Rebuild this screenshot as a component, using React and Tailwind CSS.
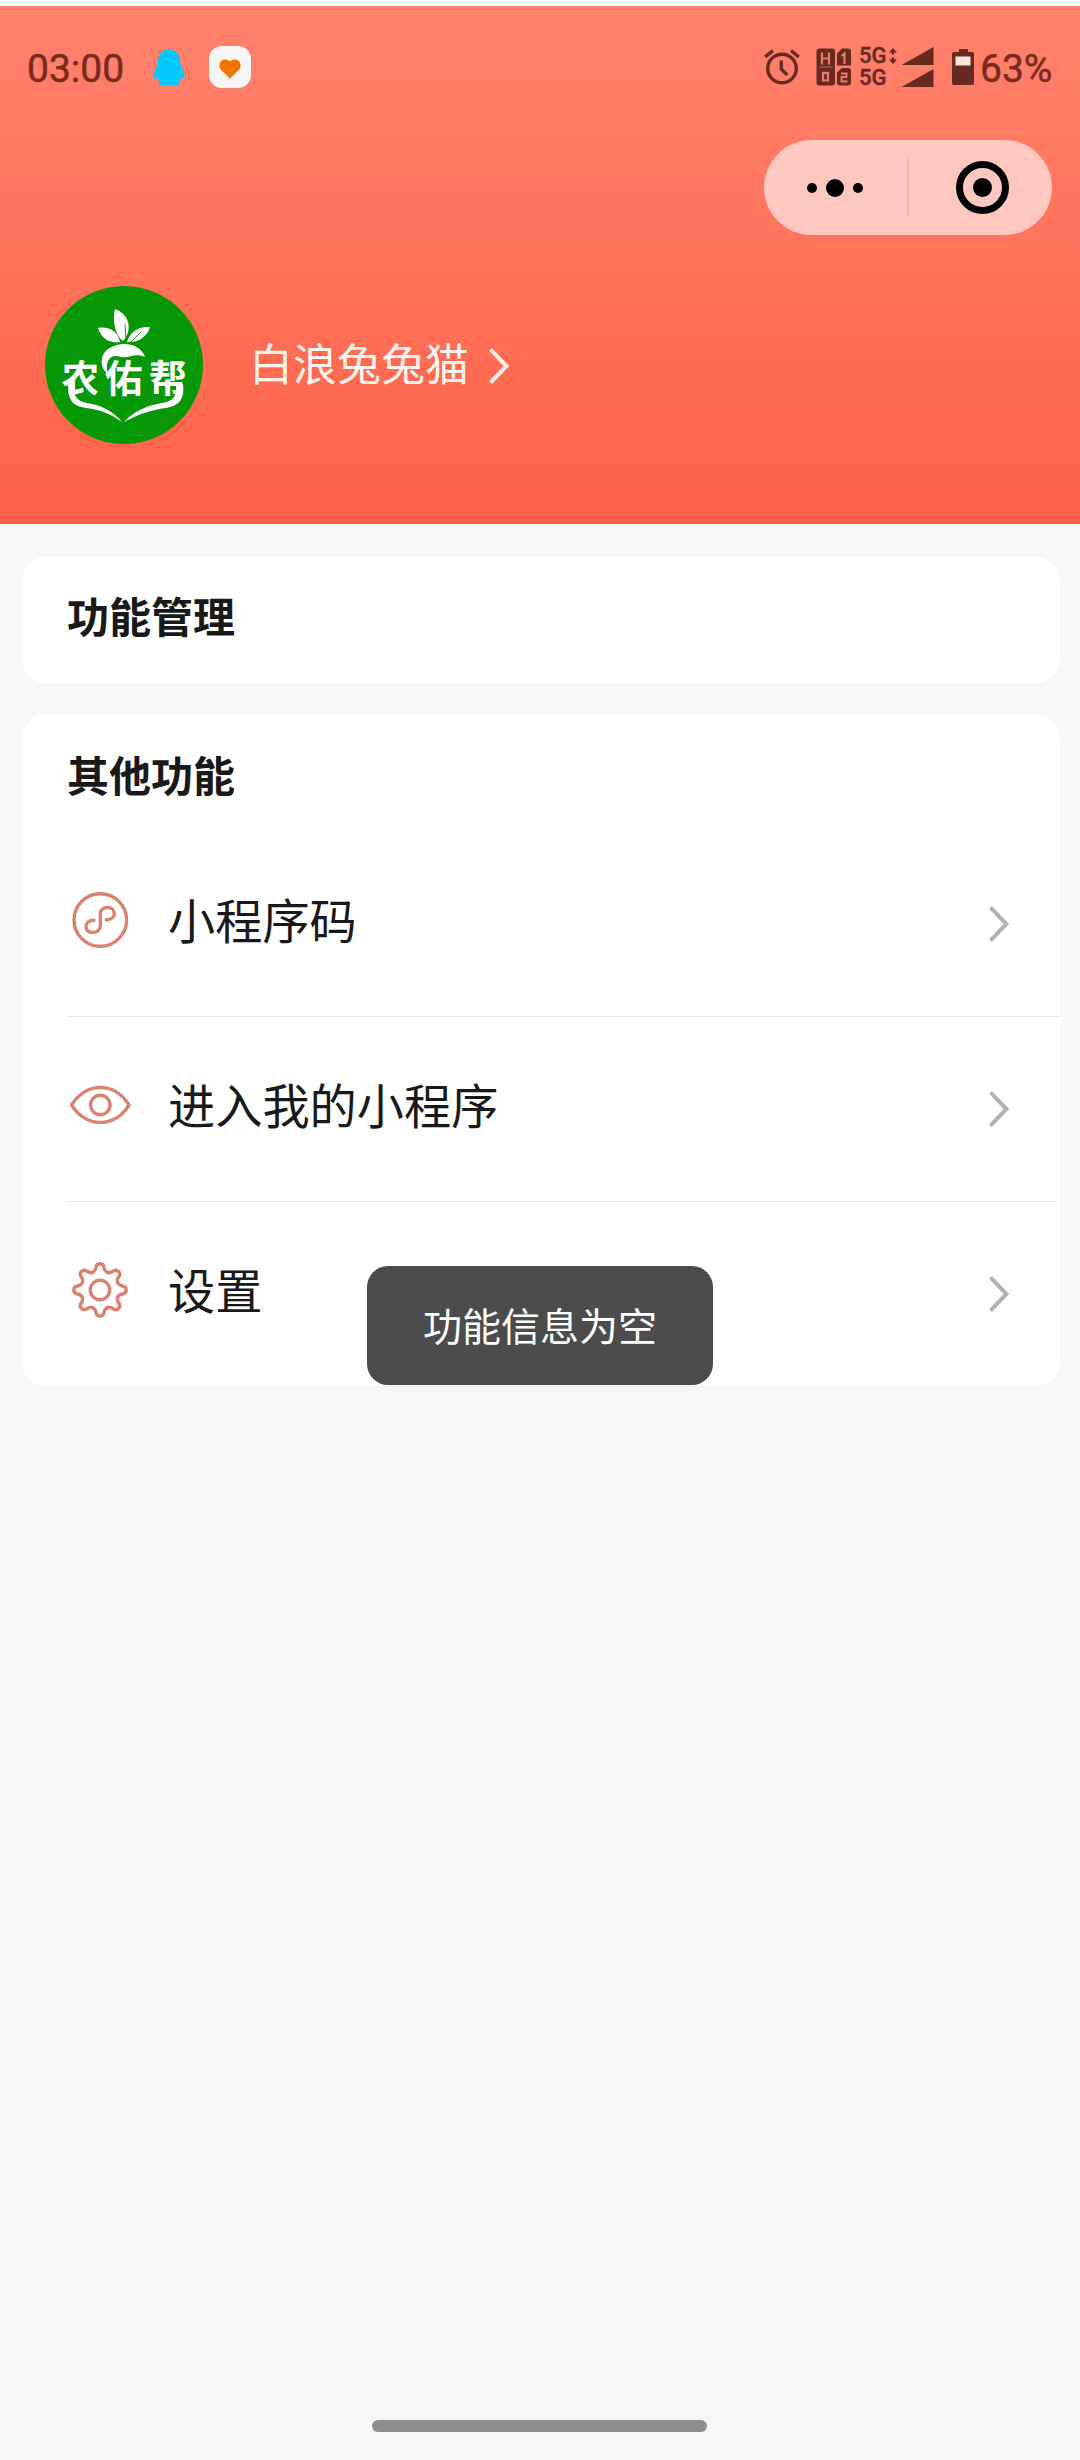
const Chevron = ({ className }) => (
    <svg viewBox="0 0 20 36" className={className} fill="none" stroke="currentColor" strokeWidth="4">
        <path d="M1.4 1.4 L17.400 18 L1.4 34.600" />
    </svg>
);

const QQIcon = () => (
    <svg viewBox="0 0 32 37" className="w-8 h-[37px] ml-[29px]" fill="#05c8fe">
        <path d="M16 0.500C9.500 0.500 5.500 5 5 12l-1 5C2 20.500 0.500 24 0.500 28c0 2.500 1.500 2.500 4 .5.300 1.600.900 2.500 1.500 3.500v4.500h20V32c.6-1 1.200-1.900 1.500-3.500 2.500 2 4 2 4-.5 0-4-1.500-7.500-3.500-11l-1-5C26.500 5 22.500 0.500 16 0.500z" />
    </svg>
);

const HeartTile = () => (
    <div className="w-[42px] h-[42px] ml-6 rounded-[13px] bg-[#f8f5f6] flex items-center justify-center">
        <svg viewBox="0 0 22 20" className="w-[22px] h-5 mt-[3px]" fill="#f47200">
            <path d="M11 19.500 L2.500 11.300C-2 6.500 1.500 0.500 6 0.500c2.200 0 4 1 5 1.800 1-.8 2.800-1.800 5-1.800 4.500 0 8 6 3.500 10.800z" />
        </svg>
    </div>
);

const AlarmIcon = () => (
    <svg viewBox="0 0 36 36" className="w-9 h-9" fill="none" stroke="currentColor" strokeWidth="3.400">
        <circle cx="18" cy="19.500" r="14.300" />
        <path d="M1.200 7.800 L9 1.700 M34.800 7.800 L27 1.700" />
        <path d="M17.300 11.500 v8.500 l6 6" />
    </svg>
);

const SimIcon = () => (
    <svg viewBox="0 0 36 38" className="w-9 h-[38px] ml-4">
        <rect x="0.500" y="0.500" width="18.500" height="37" rx="3" fill="currentColor" />
        <path d="M26 0.500h6a3 3 0 0 1 3 3v14h-14V5.500z" fill="currentColor" />
        <path d="M26 20h6a3 3 0 0 1 3 3v11.500a3 3 0 0 1-3 3h-8a3 3 0 0 1-3-3v-10z" fill="currentColor" />
        <g fill="none" stroke="#ee7966" strokeWidth="2.200">
            <path d="M6 4.500v12 M13 4.500v12 M6 10.500h7" />
            <path d="M3 19h13.500" strokeWidth="0.700" />
            <rect x="7" y="25" width="5" height="7.500" />
            <path d="M25.500 8 l3-2.500v10.500" />
            <path d="M25 25.500h5.500v3.500h-5v4.500h6" strokeWidth="1.900" />
        </g>
    </svg>
);

const SignalIcon = () => (
    <svg viewBox="0 0 33 40" className="w-[33px] h-10 ml-1" fill="currentColor">
        <path d="M0.500 18 L32.500 0V18z M0.500 40 L32.500 22V40z" />
    </svg>
);

const BatteryIcon = () => (
    <svg viewBox="0 0 22 36" className="w-[22px] h-9 ml-[18px]">
        <path d="M7 0h9v3h4a2 2 0 0 1 2 2v29a2 2 0 0 1-2 2H2a2 2 0 0 1-2-2V5a2 2 0 0 1 2-2h5z" fill="currentColor" />
        <rect x="3.500" y="7.500" width="15" height="9" fill="#ffe4df" />
    </svg>
);

const StatusBar = () => (
    <div className="h-[122px] pl-[27px] pr-[28px] flex items-center text-[#682a20]">
        <span className="w-[97px] font-[Roboto,sans-serif] text-[39px] leading-[46px] text-[#7a2a1d] [-webkit-text-stroke:0.5px] pt-1">03:00</span>
        <QQIcon />
        <HeartTile />
        <div className="ml-auto flex items-center">
            <AlarmIcon />
            <SimIcon />
            <div className="ml-[7px] w-[28px] font-[Roboto,sans-serif] text-[22px] leading-[22px] font-medium [-webkit-text-stroke:0.4px]">
                <div>5G</div>
                <div>5G</div>
            </div>
            <svg viewBox="0 0 8 16" className="w-2 h-4 ml-[2px] mb-[22px]" fill="currentColor">
                <path d="M4 0l4 4.500H5.200v2H2.800v-2H0z M4 16l4-4.500H5.200v-2H2.800v2H0z" />
            </svg>
            <SignalIcon />
            <BatteryIcon />
            <span className="ml-[6px] w-[72px] font-[Roboto,sans-serif] text-[39px] leading-[46px] text-[#7a2a1d] [-webkit-text-stroke:0.5px] pt-1">63%</span>
        </div>
    </div>
);

const Capsule = () => (
    <div className="w-[288px] h-[95px] ml-auto mr-7 mt-3 rounded-full bg-[#fec7bf] flex items-center">
        <div className="w-[144px] flex items-center justify-center gap-[9px] pr-[3px]">
            <span className="w-[10px] h-[10px] rounded-full bg-black" />
            <span className="w-[18px] h-[18px] rounded-full bg-black" />
            <span className="w-[10px] h-[10px] rounded-full bg-black" />
        </div>
        <div className="w-[2px] h-[57px] -ml-px bg-[#eeb0ae]" />
        <div className="w-[53px] h-[53px] ml-[47px] rounded-full border-[7px] border-black flex items-center justify-center">
            <span className="w-[19px] h-[19px] rounded-full bg-black" />
        </div>
    </div>
);

const Avatar = () => (
    <svg viewBox="0 0 158 158" className="w-[158px] h-[158px] rounded-full bg-[#069806]" fill="#fff">
        <path d="M70 23c-3 12 0 26 8 32c9-10 8-26-8-32z" />
        <path d="M53 42c3 10 12 16 22 14c-2-11-12-16-22-14z" />
        <path d="M105 41c-12-1-20 5-23 15c11 1 20-5 23-15z" />
        <path d="M80 38l1 18 M96 46l-12 12" stroke="#069806" strokeWidth="0.900" fill="none" />
        <path d="M58 69c7-14 36-16 42 2c-10-5-17 2-24 0c-7-2-10-1-13 4c-2 5-1 9 0 13c-6-4-8-12-5-19z" />
        <text
            x="16.500 60 104"
            y="107"
            fontFamily="'Noto Sans CJK SC', sans-serif"
            fontWeight="700"
            fontSize="37.500"
            dy="-1.500"
        >
            农佑帮
        </text>
        <path d="M23 98c0 17 5 22 18 24c15 2 23 5 36 14c-9-11-21-17-35-19c-10-2-14-7-14-19z" />
        <path d="M138 98c2 15-4 22-17 24c-15 2-27 6-42 14c10-11 24-17 38-19c11-2 15-6 14-19z" />
    </svg>
);

const MiniProgramIcon = () => (
    <svg viewBox="0 0 64 64" className="w-16 h-16" fill="none" stroke="#d98271" strokeWidth="3.400" strokeLinecap="round">
        <circle cx="32.300" cy="32" r="26.300" />
        <path d="M26 32.300C20 32.300 18 35.500 18 38.500C18 42.200 20.500 44.500 24.500 44.500C29 44.500 32.300 42 32.300 38V26C32.300 22 35 19.500 39.500 19.500C43.500 19.500 46.300 22 46.300 25.500C46.300 28.500 44 31.700 38.300 31.700" />
    </svg>
);

const EyeIcon = () => (
    <svg viewBox="0 0 64 64" className="w-16 h-16" fill="none" stroke="#d98271" strokeWidth="3.400" strokeLinejoin="round">
        <path d="M3.600 32C18 8.700 47 8.700 61 32C47 55.300 18 55.300 3.600 32z" />
        <circle cx="32.300" cy="32" r="9.700" />
    </svg>
);

const teeth = [0, 45, 90, 135, 180, 225, 270, 315];

const GearIcon = () => (
    <svg viewBox="-32 -32 64 64" className="w-16 h-16" fill="none" stroke="#d98271" strokeWidth="3.400" strokeLinecap="round">
        {teeth.map((deg) => (
            <path
                key={deg}
                transform={`rotate(${deg})`}
                d="M-7.300 -17.700C-5.300 -18.500 -4.500 -20 -4 -22.500C-3.600 -25.300 -2.600 -26.200 0 -26.200C2.600 -26.200 3.600 -25.300 4 -22.500C4.500 -20 5.300 -18.500 7.300 -17.700"
            />
        ))}
        <circle cx="0" cy="0" r="9.700" />
    </svg>
);

const items = [
    { label: '小程序码', icon: MiniProgramIcon, line: 'w-[992px]' },
    { label: '进入我的小程序', icon: EyeIcon, line: 'w-[988px]' },
    { label: '设置', icon: GearIcon },
];

const MenuItem = ({ label, icon: Icon, line }) => (
    <div className="h-[185px] pl-[46px]">
        <div className="h-[184px] pr-[51px] pb-2 flex items-center">
            <Icon />
            <span className="ml-9 -mt-[2px] text-[47.2px] leading-[60px] text-[#191919]">{label}</span>
            <Chevron className="w-5 h-9 ml-auto mt-[7px] text-[#b2b2b2]" />
        </div>
        {line && <div className={`h-px bg-[#e5e5e5] ${line}`} />}
    </div>
);

const App = () => (
    <div className="w-[1080px] h-[2460px] pt-[6px] bg-white font-['Noto_Sans_CJK_SC',sans-serif]">
        <div className="relative h-[2454px] bg-[#f7f7f7] flex flex-col">
            <header className="h-[518px] bg-gradient-to-b from-[#ff826d] to-[#ff6146]">
                <StatusBar />
                <Capsule />
                <div className="mt-[51px] pl-[45px] flex items-center">
                    <Avatar />
                    <span className="ml-[46px] -mt-[7px] text-[44px] leading-[60px] text-[#fff4ef]">白浪兔兔猫</span>
                    <Chevron className="w-5 h-9 ml-5 mt-px text-[#fff0ea]" />
                </div>
            </header>

            <main className="pt-[33px] pl-[22px] pr-5 flex flex-col gap-8">
                <section className="h-[126px] pl-[45px] pt-7 rounded-3xl bg-white">
                    <h2 className="text-[42px] leading-[60px] font-bold text-[#191919]">功能管理</h2>
                </section>
                <section className="h-[671px] pt-[29px] rounded-3xl bg-white">
                    <h2 className="pl-[45px] pb-7 text-[42px] leading-[60px] font-bold text-[#191919]">其他功能</h2>
                    {items.map((item) => (
                        <MenuItem key={item.label} {...item} />
                    ))}
                </section>
            </main>

            <div className="absolute left-[367px] top-[1260px] w-[346px] h-[119px] pb-[3px] rounded-[21px] bg-[#4c4c4c] flex items-center justify-center">
                <span className="text-[39px] leading-[60px] text-white">功能信息为空</span>
            </div>

            <div className="w-[335px] h-3 mt-auto mb-7 ml-[372px] rounded-full bg-[#8e8e8e]" />
        </div>
    </div>
);

export default App;
